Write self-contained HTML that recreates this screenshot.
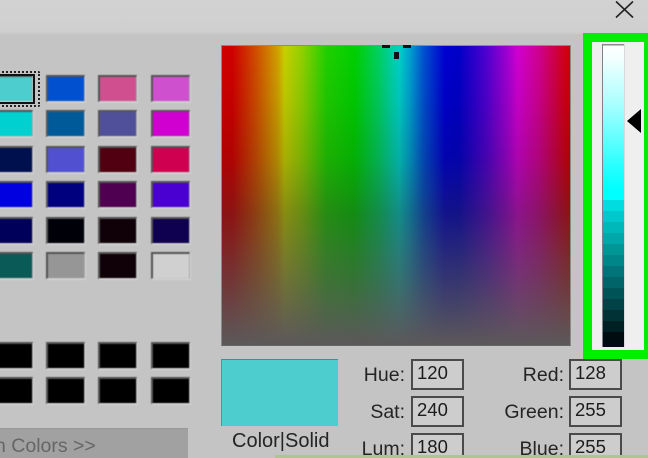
<!DOCTYPE html>
<html>
<head>
<meta charset="utf-8">
<style>
html,body{margin:0;padding:0;width:648px;height:458px;overflow:hidden;background:#c4c4c4;}
body{position:relative;font-family:"Liberation Sans",sans-serif;color:#222;}
div{position:absolute;box-sizing:border-box;}
.sw{width:39px;height:27px;border-style:solid;border-width:2px 1px 1px 2px;border-color:#555 #a8a8b0 #c8c8c8 #555;box-shadow:1px 1px 0 #d4d4d4;filter:blur(.4px);}
.t{font-size:19.5px;line-height:20px;white-space:nowrap;color:#242424;filter:blur(.3px);}
.r{text-align:right;}
.in{width:53px;height:31px;border:2px solid #4a4a4a;background:#cdcdcd;font-size:18.5px;line-height:24px;padding-left:4px;color:#1c1c1c;filter:blur(.3px);}
</style>
</head>
<body>
<!-- title band -->
<div style="left:0;top:0;width:648px;height:34px;background:linear-gradient(#d2d2d2,#d0d0d0 90%,#cacaca);"></div>

<!-- close icon -->
<svg style="position:absolute;left:612px;top:0" width="26" height="20" viewBox="0 0 26 20"><path d="M4 1.5L21 17.5M21 1.5L4 17.5" stroke="#222" stroke-width="1.6" fill="none"/></svg>

<!-- basic swatches -->
<div class="sw" style="left:-6px;top:75px;background:#4dcdcd;"></div>
<div class="sw" style="left:46px;top:75px;background:#0050d0;"></div>
<div class="sw" style="left:98px;top:75px;background:#d0508f;"></div>
<div class="sw" style="left:151px;top:75px;background:#cf50cf;"></div>

<div class="sw" style="left:-6px;top:110px;background:#00d0d0;"></div>
<div class="sw" style="left:46px;top:110px;background:#005a9a;"></div>
<div class="sw" style="left:98px;top:110px;background:#50509a;"></div>
<div class="sw" style="left:151px;top:110px;background:#d000d0;"></div>

<div class="sw" style="left:-6px;top:146px;background:#00104f;"></div>
<div class="sw" style="left:46px;top:146px;background:#5050d0;"></div>
<div class="sw" style="left:98px;top:146px;background:#500010;"></div>
<div class="sw" style="left:151px;top:146px;background:#d00050;"></div>

<div class="sw" style="left:-6px;top:181px;background:#0000e0;"></div>
<div class="sw" style="left:46px;top:181px;background:#00007e;"></div>
<div class="sw" style="left:98px;top:181px;background:#500050;"></div>
<div class="sw" style="left:151px;top:181px;background:#4a00d0;"></div>

<div class="sw" style="left:-6px;top:217px;background:#00005a;"></div>
<div class="sw" style="left:46px;top:217px;background:#000008;"></div>
<div class="sw" style="left:98px;top:217px;background:#100008;"></div>
<div class="sw" style="left:151px;top:217px;background:#100050;"></div>

<div class="sw" style="left:-6px;top:252px;background:#0a5a58;"></div>
<div class="sw" style="left:46px;top:252px;background:#969696;"></div>
<div class="sw" style="left:98px;top:252px;background:#100008;"></div>
<div class="sw" style="left:151px;top:252px;background:#d0d0d0;"></div>

<!-- selected swatch outline -->
<div style="left:-6px;top:74px;width:41px;height:30px;border:2px solid #111;"></div>
<div style="left:-6px;top:71px;width:46px;height:36px;border:2px dotted #222;border-radius:2px;"></div>

<!-- custom swatches -->
<div class="sw" style="left:-6px;top:342px;background:#000;"></div>
<div class="sw" style="left:46px;top:342px;background:#000;"></div>
<div class="sw" style="left:98px;top:342px;background:#000;"></div>
<div class="sw" style="left:151px;top:342px;background:#000;"></div>
<div class="sw" style="left:-6px;top:377px;background:#000;"></div>
<div class="sw" style="left:46px;top:377px;background:#000;"></div>
<div class="sw" style="left:98px;top:377px;background:#000;"></div>
<div class="sw" style="left:151px;top:377px;background:#000;"></div>

<!-- define custom colors button -->
<div style="left:-2px;top:428px;width:190px;height:32px;background:#a1a1a1;border-top:1px solid #989898;"></div>
<div class="t" style="left:-5px;top:436px;color:#666;">n Colors &gt;&gt;</div>

<!-- spectrum -->
<div style="left:221px;top:45px;width:350px;height:301px;border:1px solid #8a8a8a;border-bottom-color:#666;background:
linear-gradient(to bottom,rgba(0,0,0,0) 0%,rgba(0,0,0,.06) 18%,rgba(20,20,20,.18) 38%,rgba(45,45,45,.42) 56%,rgba(75,75,75,.7) 78%,rgba(92,88,90,1) 100%),
linear-gradient(to right,#d00000 0%,#d00000 3%,#d05000 10%,#d0a000 16%,#c8d000 18%,#90d000 23%,#20d000 30%,#00d000 38%,#00d060 45%,#00d0a8 49%,#00d0c8 51%,#00a0d0 54%,#0050d0 58%,#0000d0 64%,#0000c8 68%,#5000d0 76%,#a000d0 82%,#d000d0 85%,#d00090 91%,#d00040 96%,#d00000 100%);"></div>

<!-- crosshair -->
<div style="left:382px;top:45px;width:8px;height:3px;background:#111;"></div>
<div style="left:403px;top:45px;width:8px;height:3px;background:#111;"></div>
<div style="left:394px;top:52px;width:5px;height:7px;background:#111;"></div>

<!-- green highlight -->
<div style="left:583px;top:33px;width:70px;height:326px;border:9px solid #00ee00;background:#efefef;"></div>

<!-- lum slider -->
<div style="left:602px;top:44px;width:23px;height:303px;background:linear-gradient(to bottom,#8c8c90 0,#8c8c90 1px,#fff 2px,#f0ffff 16px,#b0ffff 56px,#60ffff 96px,#20ffff 126px,#00ffff 146px,#00ffff 156px,
#00dce0 156px,#00dce0 167px,#00c8cc 167px,#00c8cc 178px,#00b8ba 178px,#00b8ba 189px,#00a8aa 189px,#00a8aa 200px,#009698 200px,#009698 211px,#008688 211px,#008688 222px,#007478 222px,#007478 233px,#006468 233px,#006468 244px,#005458 244px,#005458 255px,#004246 255px,#004246 266px,#003236 266px,#003236 277px,#002024 277px,#002024 288px,#000c10 288px,#000c10 303px);border-left:1px solid #80808a;border-right:1px solid #d8d8de;"></div>

<!-- triangle -->
<svg style="position:absolute;left:627px;top:108px" width="15" height="26" viewBox="0 0 15 26"><path d="M0 13L14 1V25Z" fill="#000"/></svg>

<!-- result colour -->
<div style="left:221px;top:359px;width:117px;height:67px;background:#4dcdcd;border-top:1px solid #4b8b8b;border-left:1px solid #4b9b9b;"></div>
<div class="t" style="left:232px;top:431px;font-size:20px;">Color|Solid</div>

<!-- labels and inputs -->
<div class="t r" style="left:344px;top:365px;width:61px;">Hue:</div>
<div class="in" style="left:411px;top:359px;">120</div>
<div class="t r" style="left:344px;top:402px;width:61px;">Sat:</div>
<div class="in" style="left:411px;top:396px;">240</div>
<div class="t r" style="left:344px;top:439px;width:61px;">Lum:</div>
<div class="in" style="left:411px;top:433px;">180</div>

<div class="t r" style="left:484px;top:365px;width:80px;">Red:</div>
<div class="in" style="left:569px;top:359px;">128</div>
<div class="t r" style="left:484px;top:402px;width:80px;">Green:</div>
<div class="in" style="left:569px;top:396px;">255</div>
<div class="t r" style="left:484px;top:439px;width:80px;">Blue:</div>
<div class="in" style="left:569px;top:433px;">255</div>

<!-- bottom strip -->
<div style="left:275px;top:455px;width:373px;height:3px;background:#a9c78f;"></div>
</body>
</html>
